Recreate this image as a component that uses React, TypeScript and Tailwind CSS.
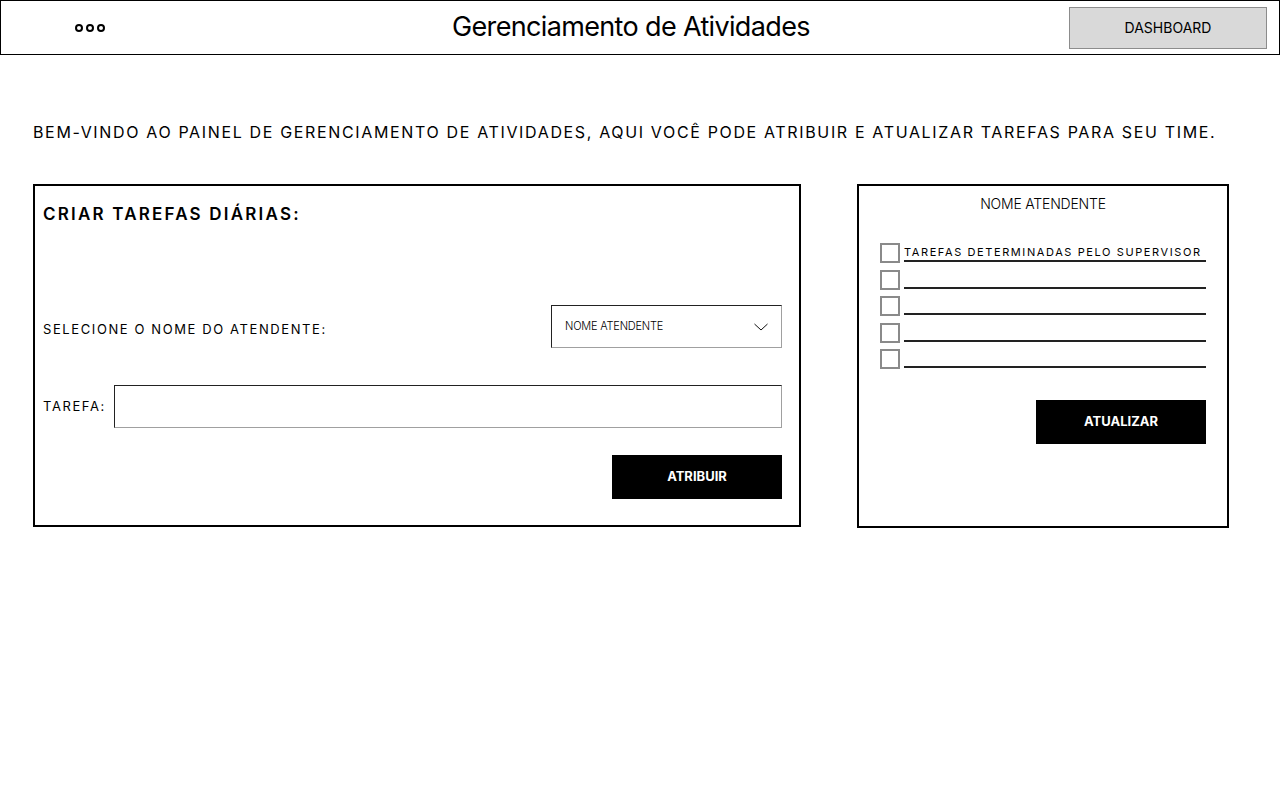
import { useState } from "react";

const font = "font-['Inter','Liberation_Sans',sans-serif]";

const rows = ["TAREFAS DETERMINADAS PELO SUPERVISOR", "", "", "", ""];

function Header() {
  return (
    <header className="flex h-[55px] items-center border border-black">
      <div className="flex w-[451px] items-center gap-[3px] pl-[74px]">
        <span className="h-[8px] w-[8px] rounded-full border-2 border-black" />
        <span className="h-[8px] w-[8px] rounded-full border-2 border-black" />
        <span className="h-[8px] w-[8px] rounded-full border-2 border-black" />
      </div>
      <h1 className="m-0 text-[27px] font-normal tracking-[-0.65px] text-black">Gerenciamento de Atividades</h1>
      <button className="ml-auto mr-[12px] h-[42px] w-[198px] border border-[#8c8c8c] bg-[#d9d9d9] text-[14px] text-black">
        DASHBOARD
      </button>
    </header>
  );
}

function CreateTaskCard() {
  return (
    <section className="flex h-[343px] w-[768px] flex-col border-2 border-black pl-[8px] pr-[17px] pt-[16px]">
      <h2 className="m-0 text-[17px] font-semibold leading-[24px] tracking-[2.2px] text-black">CRIAR TAREFAS DIÁRIAS:</h2>
      <div className="mt-[79px] flex items-center justify-between">
        <span className="mt-[7px] text-[13px] tracking-[1.6px] text-black">SELECIONE O NOME DO ATENDENTE:</span>
        <div className="flex h-[43px] w-[231px] items-center justify-between border border-[#222] border-b-[#a0a0a0] border-r-[#a0a0a0] pl-[13px] pr-[13px]">
          <span className="text-[11px] font-light tracking-[-0.2px] text-black">NOME ATENDENTE</span>
          <svg width="14" height="8" viewBox="0 0 14 8" fill="none">
            <polyline points="0.5,1 7,7 13.5,1" stroke="#111" strokeWidth="1" />
          </svg>
        </div>
      </div>
      <div className="mt-[37px] flex items-center gap-[8px]">
        <span className="text-[13px] tracking-[1.6px] text-black">TAREFA:</span>
        <div className="h-[43px] flex-1 border border-[#222] border-b-[#a0a0a0] border-r-[#a0a0a0]" />
      </div>
      <div className="mt-[27px] flex justify-end">
        <button className="h-[44px] w-[170px] bg-black text-[13px] font-bold text-white">ATRIBUIR</button>
      </div>
    </section>
  );
}

function AssigneeCard() {
  const [checked, setChecked] = useState<boolean[]>(rows.map(() => false));

  return (
    <section className="flex h-[344px] w-[372px] flex-col border-2 border-black px-[21px] pt-[8px]">
      <p className="m-0 text-center text-[14px] font-light leading-[20px] tracking-[-0.2px] text-black">NOME ATENDENTE</p>
      <ul className="m-0 mt-[29px] flex list-none flex-col p-0">
        {rows.map((label, i) => (
          <li key={i} className="flex h-[26.5px] items-start gap-[4px]">
            <button
              aria-label="marcar"
              onClick={() => setChecked(checked.map((c, j) => (j === i ? !c : c)))}
              className="h-[20px] w-[20px] shrink-0 border-2 border-[#8a8a8a] bg-white"
            />
            <div className="flex h-[19px] flex-1 items-end border-b-2 border-[#222] pb-[1px]">
              <span className="text-[11px] leading-[14px] tracking-[1.6px] text-black">{label}</span>
            </div>
          </li>
        ))}
      </ul>
      <div className="mt-[24px] flex justify-end">
        <button className="h-[44px] w-[170px] bg-black text-[13px] font-bold text-white">ATUALIZAR</button>
      </div>
    </section>
  );
}

export default function App() {
  return (
    <div className={`${font} min-h-[800px] bg-white`}>
      <Header />
      <main className="px-[33px] pt-[65px]">
        <p className="m-0 whitespace-nowrap text-[16px] leading-[24px] tracking-[1.65px] text-black">
          BEM-VINDO AO PAINEL DE GERENCIAMENTO DE ATIVIDADES, AQUI VOCÊ PODE ATRIBUIR E ATUALIZAR TAREFAS PARA SEU TIME.
        </p>
        <div className="mt-[40px] flex gap-[56px]">
          <CreateTaskCard />
          <AssigneeCard />
        </div>
      </main>
    </div>
  );
}
